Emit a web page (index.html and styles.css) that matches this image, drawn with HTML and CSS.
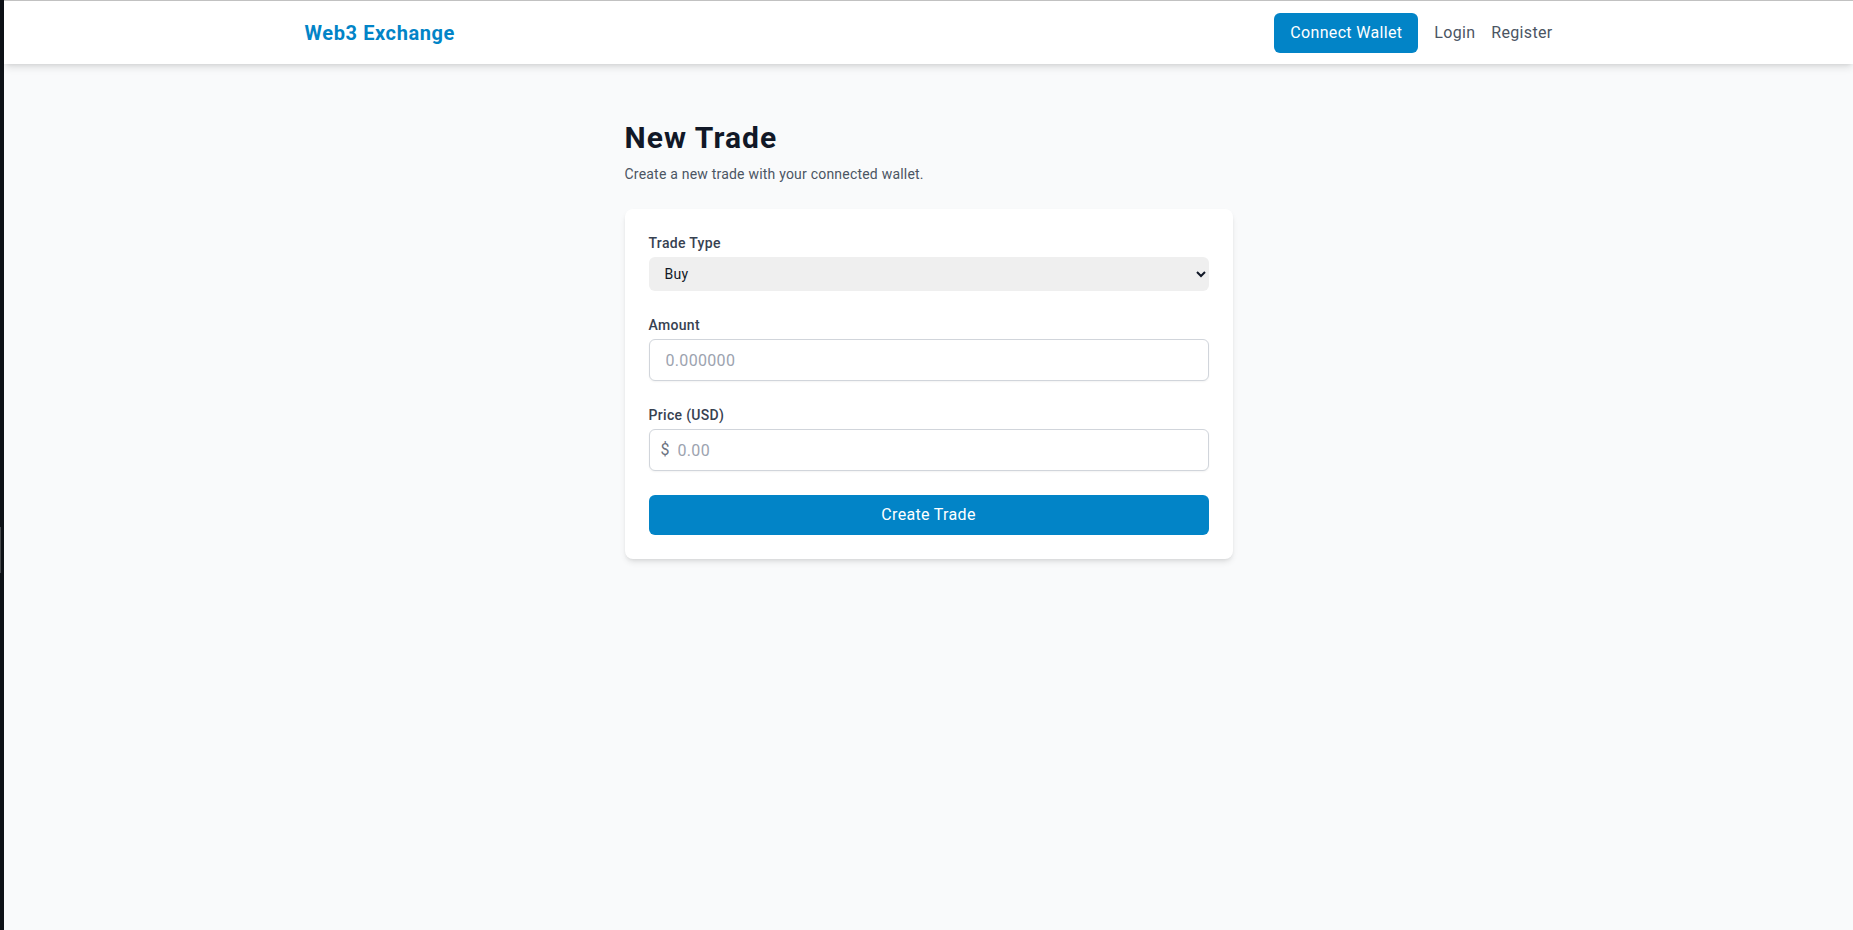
FILE: index.html
```html
<!DOCTYPE html>
<html lang="en">
<head>
<meta charset="utf-8">
<title>Web3 Exchange - New Trade</title>
<link rel="stylesheet" href="styles.css">
</head>
<body>
<div class="frame">
  <div class="strip"><span class="strip-mark"></span></div>
  <div class="page">
    <header class="topbar">
      <div class="topbar-inner">
        <a class="brand" href="#">Web3 Exchange</a>
        <nav class="nav">
          <button class="btn-connect" type="button">Connect Wallet</button>
          <a class="nav-link" href="#">Login</a>
          <a class="nav-link" href="#">Register</a>
        </nav>
      </div>
    </header>
    <main class="main">
      <h1 class="title">New Trade</h1>
      <p class="subtitle">Create a new trade with your connected wallet.</p>
      <form class="card">
        <div class="field">
          <label class="label" for="type">Trade Type</label>
          <select class="select" id="type">
            <option>Buy</option>
            <option>Sell</option>
          </select>
        </div>
        <div class="field">
          <label class="label" for="amount">Amount</label>
          <input class="input input-amount" id="amount" type="text" placeholder="0.000000">
        </div>
        <div class="field">
          <label class="label" for="price">Price (USD)</label>
          <div class="input-wrap">
            <span class="prefix">$</span>
            <input class="input input-price" id="price" type="text" placeholder="0.00">
          </div>
        </div>
        <button class="btn-submit" type="button">Create Trade</button>
      </form>
    </main>
  </div>
</div>
</body>
</html>
```

FILE: styles.css
```css
* { box-sizing: border-box; }

html, body {
  margin: 0;
  padding: 0;
  height: 100%;
}

body {
  font-family: Roboto, "Liberation Sans", sans-serif;
  letter-spacing: 0.02em;
  background: #f9fafb;
  color: #111827;
}

button, input, select {
  letter-spacing: 0.02em;
}

.frame {
  display: flex;
  min-height: 100vh;
}

.strip {
  width: 4px;
  flex: 0 0 4px;
  background: #0e1217;
  position: relative;
}

.strip-mark {
  position: absolute;
  left: 0;
  top: 527px;
  width: 1px;
  height: 46px;
  background: #46494d;
}

.page {
  flex: 1;
  min-width: 0;
  border-top: 1px solid #c3c3c3;
}

.topbar {
  height: 63px;
  background: #ffffff;
  box-shadow: 0 4px 8px -1px rgba(0, 0, 0, 0.12), 0 2px 4px -2px rgba(0, 0, 0, 0.1);
  position: relative;
}

.topbar-inner {
  max-width: 1280px;
  height: 100%;
  margin: 0 auto;
  padding: 0 16px;
  display: flex;
  align-items: center;
  justify-content: space-between;
}

.brand {
  font-size: 20px;
  font-weight: 700;
  letter-spacing: 0.03em;
  color: #0284c7;
  text-decoration: none;
  line-height: 28px;
}

.nav {
  display: flex;
  align-items: center;
  gap: 16px;
}

.btn-connect {
  font-family: inherit;
  font-size: 16px;
  line-height: 24px;
  color: #ffffff;
  background: #0284c7;
  border: none;
  border-radius: 6px;
  padding: 8px 16px;
  height: 40px;
}

.nav-link {
  font-size: 16px;
  line-height: 24px;
  color: #4b5563;
  text-decoration: none;
}

.main {
  max-width: 672px;
  margin: 0 auto;
  padding: 56px 32px 32px;
}

.title {
  margin: 0 0 8px;
  font-size: 30px;
  line-height: 36px;
  font-weight: 700;
  letter-spacing: 0.035em;
  color: #111827;
}

.subtitle {
  margin: 0 0 25px;
  font-size: 14px;
  line-height: 20px;
  letter-spacing: 0.015em;
  color: #4b5563;
}

.card {
  background: #ffffff;
  border-radius: 8px;
  box-shadow: 0 4px 6px -1px rgba(0, 0, 0, 0.1), 0 2px 4px -2px rgba(0, 0, 0, 0.1);
  padding: 24px;
  display: flex;
  flex-direction: column;
  gap: 24px;
}

.field {
  display: flex;
  flex-direction: column;
}

.label {
  font-size: 14px;
  line-height: 20px;
  font-weight: 500;
  color: #374151;
  margin-bottom: 4px;
}

.select {
  font-family: inherit;
  font-size: 14px;
  height: 34px;
  padding: 0 12px;
  background-color: #efefef;
  color: #111827;
  border: none;
  border-radius: 6px;
}

.input {
  font-family: inherit;
  font-size: 16px;
  line-height: 24px;
  height: 42px;
  padding: 8px 12px;
  border: 1px solid #d1d5db;
  border-radius: 6px;
  color: #111827;
  background: #ffffff;
  width: 100%;
  box-shadow: 0 1px 2px rgba(0, 0, 0, 0.05);
}

.input::placeholder {
  color: #9ca3af;
}

.input-amount {
  padding-left: 16px;
}

.input-wrap {
  position: relative;
}

.prefix {
  position: absolute;
  left: 12px;
  top: 9px;
  font-size: 16px;
  line-height: 24px;
  color: #6b7280;
}

.input-price {
  padding-left: 28px;
}

.btn-submit {
  font-family: inherit;
  font-size: 16px;
  line-height: 24px;
  height: 40px;
  color: #ffffff;
  background: #0284c7;
  border: none;
  border-radius: 6px;
}
```
